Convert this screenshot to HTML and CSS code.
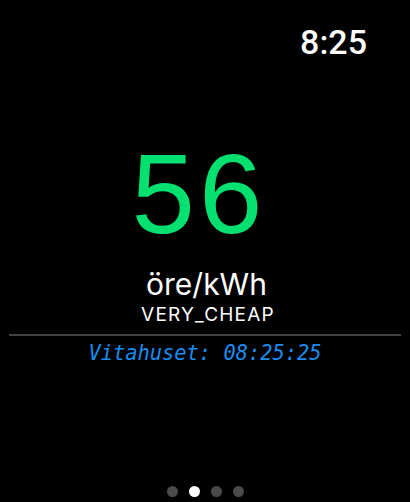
FILE: index.html
```html
<!DOCTYPE html>
<html>
<head>
<meta charset="utf-8">
<link rel="stylesheet" href="styles.css">
</head>
<body>
<div class="screen">
  <header class="status">
    <span class="clock">8:25</span>
  </header>
  <main class="content">
    <div class="price">56</div>
    <div class="unit">öre/kWh</div>
    <div class="level">VERY_CHEAP</div>
    <hr class="divider">
    <div class="updated">Vitahuset: 08:25:25</div>
  </main>
  <nav class="pager">
    <span class="dot"></span>
    <span class="dot active"></span>
    <span class="dot"></span>
    <span class="dot"></span>
  </nav>
</div>
</body>
</html>
```

FILE: styles.css
```css
html, body {
  margin: 0;
  padding: 0;
  background: #000;
}
.screen {
  width: 410px;
  height: 502px;
  display: flex;
  flex-direction: column;
  font-family: Inter, Roboto, sans-serif;
  color: #fff;
  overflow: hidden;
}
.status {
  display: flex;
  justify-content: flex-end;
  padding: 22px 43px 0 0;
  height: 48px;
}
.clock {
  font-family: Roboto, sans-serif;
  font-size: 34px;
  line-height: 40px;
  font-weight: 500;
}
.content {
  display: flex;
  flex-direction: column;
  align-items: center;
  padding-top: 65px;
}
.price {
  font-family: "Liberation Sans", Arial, sans-serif;
  font-size: 114px;
  line-height: 117px;
  letter-spacing: 4px;
  padding-right: 12px;
  color: #02e070;
  font-weight: 400;
}
.unit {
  font-size: 30px;
  line-height: 34px;
  margin-top: 15px;
  padding-left: 3px;
}
.level {
  font-size: 19px;
  line-height: 22px;
  letter-spacing: 1.2px;
  margin-top: 3px;
  padding-left: 6px;
  font-weight: 400;
}
.divider {
  align-self: stretch;
  margin: 8px 9px 0 9px;
  border: 0;
  height: 2px;
  background: #444;
}
.updated {
  font-family: "DejaVu Sans Mono", "Liberation Mono", monospace;
  font-style: italic;
  font-size: 20.4px;
  line-height: 24px;
  color: #1a8cf0;
  margin-top: 5px;
}
.pager {
  margin-top: auto;
  display: flex;
  justify-content: center;
  gap: 11px;
  padding-bottom: 5px;
}
.dot {
  width: 11px;
  height: 11px;
  border-radius: 50%;
  background: #4a4a4a;
}
.dot.active {
  background: #fff;
}
```
